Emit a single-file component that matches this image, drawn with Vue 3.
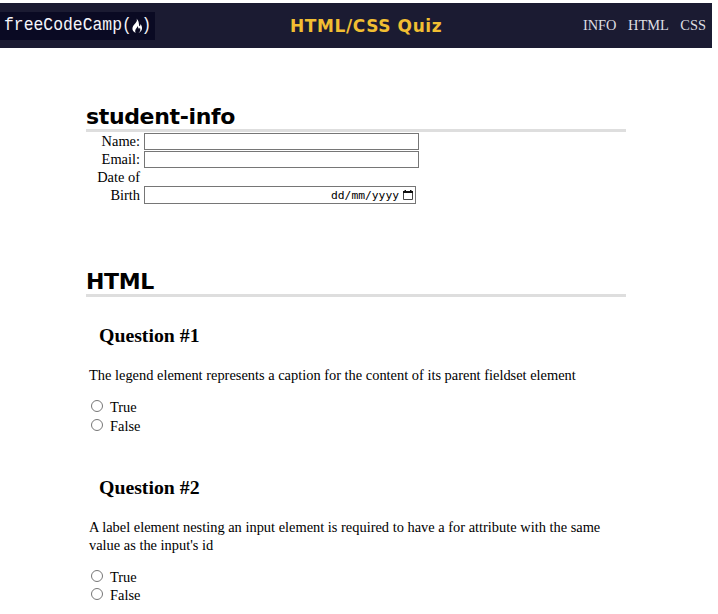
<script setup>
const links = ['INFO', 'HTML', 'CSS']
const questions = [
  { id: 1, text: 'The legend element represents a caption for the content of its parent fieldset element' },
  { id: 2, text: "A label element nesting an input element is required to have a for attribute with the same value as the input's id" },
]
</script>

<template>
  <div class="page">
    <header class="bar">
      <svg class="logo" width="155" height="28" viewBox="0 0 155 28">
        <rect width="155" height="28" fill="#0a0a23" />
        <g class="word" transform="scale(1 1.15)">
          <text x="4" y="16" textLength="118" lengthAdjust="spacingAndGlyphs">freeCodeCamp</text>
          <text x="122" y="15.800">(</text>
          <text x="141.5" y="15.800">)</text>
        </g>
        <path
          d="M136.300 6.500c1.700 2.300-.5 4-2.200 6.300c-2.500 3-2.300 6 1.500 8.200c-.8-2.200-.4-3.400 1.200-5.200c.4-.6.500-1.200.4-1.800c1.500 1.600.8 2.500 1.800 2.600c.8 0 .9-.8.600-1.400c1.300 1.900 1.100 3.900-1.200 6c4.300-2 4.500-5.800 2.100-9.100c0 1.300-.5 2.100-1.300 2.200c-.3-3.300-.5-6.300-2.900-7.800z"
          fill="#fff"
        />
      </svg>
      <h1>HTML/CSS Quiz</h1>
      <nav>
        <a v-for="l in links" :key="l">{{ l }}</a>
      </nav>
    </header>

    <main>
      <section class="info-section">
        <h2>student-info</h2>
        <div class="field">
          <label for="name">Name:</label>
          <input id="name" class="box" type="text" />
        </div>
        <div class="field">
          <label for="email">Email:</label>
          <input id="email" class="box" type="email" />
        </div>
        <div class="field date">
          <label>Date of Birth</label>
          <div class="box datebox">
            <span>dd/mm/yyyy</span>
            <svg width="10" height="11" viewBox="0 0 10 11">
              <path d="M.5 2.500h9v7h-9z" fill="none" stroke="#444" />
              <path d="M0 1h10v2H0zM1.500 0h1.500v1H1.500zM7 0h1.500v1H7z" fill="#111" />
            </svg>
          </div>
        </div>
      </section>

      <section>
        <h2>HTML</h2>
        <article v-for="q in questions" :key="q.id" class="question">
          <h3>Question #{{ q.id }}</h3>
          <p>{{ q.text }}</p>
          <label v-for="a in ['True', 'False']" :key="a" class="answer">
            <input type="radio" :name="'q' + q.id" />{{ a }}
          </label>
        </article>
      </section>
    </main>
  </div>
</template>

<style>
body {
  background: #fff;
  overflow: hidden;
}
</style>

<style scoped>
.page {
  width: 712px;
  height: 614px;
  padding-top: 3px;
  box-sizing: border-box;
  overflow: hidden;
  font: 14.42px/18px "Liberation Serif", serif;
  color: #000;
}
.bar {
  display: grid;
  grid-template-columns: 290px 1fr auto;
  align-items: center;
  height: 45px;
  background: #1b1b32;
}
.logo {
  display: block;
}
.word {
  font: 16.3px "Liberation Mono", monospace;
  fill: #f5f5fa;
}
h1,
h2 {
  margin: 0;
  font-family: "DejaVu Sans", sans-serif;
  font-weight: bold;
}
h1 {
  font-size: 17px;
  line-height: 20px;
  letter-spacing: 0.6px;
  color: #f1be32;
}
nav {
  display: flex;
  gap: 11.5px;
  padding: 0 6px 2px 0;
  color: #dfdfe2;
}
main {
  width: 540px;
  margin-left: 86px;
  padding-top: 54px;
}
h2 {
  height: 27px;
  line-height: 29px;
  font-size: 22px;
  letter-spacing: -0.35px;
  border-bottom: 3px solid #dedede;
}
.info-section {
  height: 165px;
}
.field {
  display: flex;
  align-items: flex-end;
  height: 18px;
}
.field label {
  width: 54px;
  margin-right: 4px;
  text-align: right;
}
.field.date {
  height: 36px;
}
.box {
  width: 275px;
  height: 17px;
  box-sizing: border-box;
  border: 1px solid #767676;
  padding: 0;
  background: #fff;
}
.datebox {
  display: flex;
  align-items: center;
  justify-content: flex-end;
  gap: 4px;
  width: 272px;
  height: 18px;
  padding-right: 2px;
  font: 11.3px "DejaVu Sans Mono", monospace;
}
.question {
  padding: 26px 3px 0;
  margin-bottom: 14px;
}
h3 {
  margin: 0 10px 19px;
  font-size: 19.8px;
  line-height: 24px;
}
p {
  margin: 0 0 14px;
}
.answer {
  display: flex;
  align-items: center;
  height: 18.4px;
}
.answer input {
  width: 12px;
  height: 12px;
  margin: 0 6.6px 2px 2.4px;
}
</style>
